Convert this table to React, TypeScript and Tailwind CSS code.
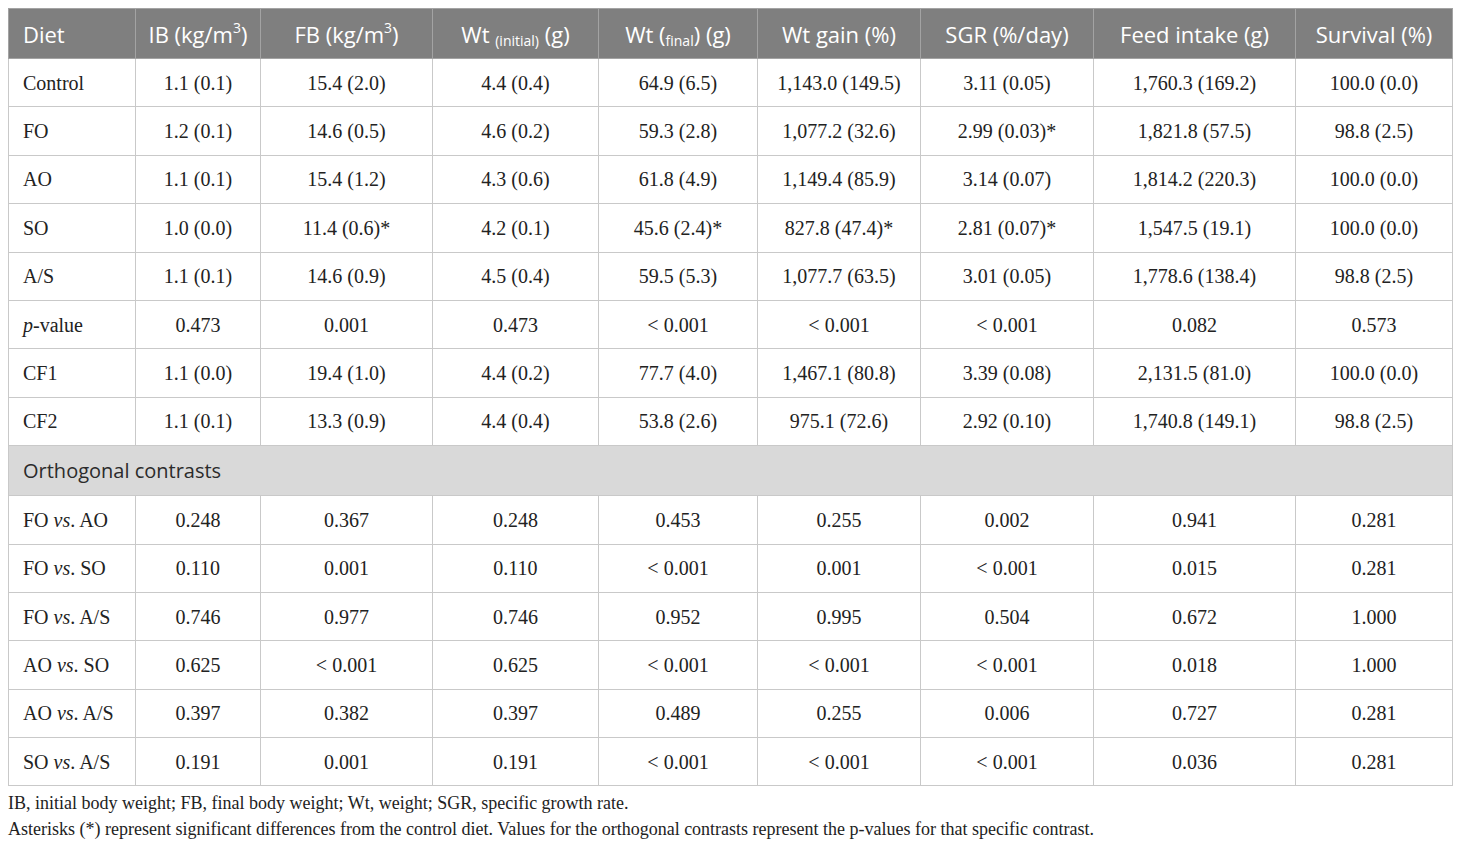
import React from 'react'

const serif = { fontFamily: '"Liberation Serif", "DejaVu Serif", serif' }

type Row = { diet: React.ReactNode; vals: string[] }

const rows: Row[] = [
    { diet: 'Control', vals: ['1.1 (0.1)', '15.4 (2.0)', '4.4 (0.4)', '64.9 (6.5)', '1,143.0 (149.5)', '3.11 (0.05)', '1,760.3 (169.2)', '100.0 (0.0)'] },
    { diet: 'FO', vals: ['1.2 (0.1)', '14.6 (0.5)', '4.6 (0.2)', '59.3 (2.8)', '1,077.2 (32.6)', '2.99 (0.03)*', '1,821.8 (57.5)', '98.8 (2.5)'] },
    { diet: 'AO', vals: ['1.1 (0.1)', '15.4 (1.2)', '4.3 (0.6)', '61.8 (4.9)', '1,149.4 (85.9)', '3.14 (0.07)', '1,814.2 (220.3)', '100.0 (0.0)'] },
    { diet: 'SO', vals: ['1.0 (0.0)', '11.4 (0.6)*', '4.2 (0.1)', '45.6 (2.4)*', '827.8 (47.4)*', '2.81 (0.07)*', '1,547.5 (19.1)', '100.0 (0.0)'] },
    { diet: 'A/S', vals: ['1.1 (0.1)', '14.6 (0.9)', '4.5 (0.4)', '59.5 (5.3)', '1,077.7 (63.5)', '3.01 (0.05)', '1,778.6 (138.4)', '98.8 (2.5)'] },
    { diet: <><i>p</i>-value</>, vals: ['0.473', '0.001', '0.473', '< 0.001', '< 0.001', '< 0.001', '0.082', '0.573'] },
    { diet: 'CF1', vals: ['1.1 (0.0)', '19.4 (1.0)', '4.4 (0.2)', '77.7 (4.0)', '1,467.1 (80.8)', '3.39 (0.08)', '2,131.5 (81.0)', '100.0 (0.0)'] },
    { diet: 'CF2', vals: ['1.1 (0.1)', '13.3 (0.9)', '4.4 (0.4)', '53.8 (2.6)', '975.1 (72.6)', '2.92 (0.10)', '1,740.8 (149.1)', '98.8 (2.5)'] },
]

const vs = (a: string, b: string) => <>{a} <i>vs</i>. {b}</>

const contrasts: Row[] = [
    { diet: vs('FO', 'AO'), vals: ['0.248', '0.367', '0.248', '0.453', '0.255', '0.002', '0.941', '0.281'] },
    { diet: vs('FO', 'SO'), vals: ['0.110', '0.001', '0.110', '< 0.001', '0.001', '< 0.001', '0.015', '0.281'] },
    { diet: vs('FO', 'A/S'), vals: ['0.746', '0.977', '0.746', '0.952', '0.995', '0.504', '0.672', '1.000'] },
    { diet: vs('AO', 'SO'), vals: ['0.625', '< 0.001', '0.625', '< 0.001', '< 0.001', '< 0.001', '0.018', '1.000'] },
    { diet: vs('AO', 'A/S'), vals: ['0.397', '0.382', '0.397', '0.489', '0.255', '0.006', '0.727', '0.281'] },
    { diet: vs('SO', 'A/S'), vals: ['0.191', '0.001', '0.191', '< 0.001', '< 0.001', '< 0.001', '0.036', '0.281'] },
]

const widths = [127, 125, 172, 166, 159, 163, 173, 202, 157]

const headers: React.ReactNode[] = [
    'Diet',
    <>IB (kg/m<sup className="text-[14px] -top-[0.7em]">3</sup>)</>,
    <>FB (kg/m<sup className="text-[14px] -top-[0.7em]">3</sup>)</>,
    <>Wt <sub className="text-[14px]">(initial)</sub> (g)</>,
    <>Wt (<sub className="text-[14px]">final</sub>) (g)</>,
    'Wt gain (%)',
    'SGR (%/day)',
    'Feed intake (g)',
    'Survival (%)',
]

const DataRow = ({ row }: { row: Row }) => (
    <tr className="h-[48.4px]">
        <td className="border border-[#c9c9c9] pl-[14px] text-left">{row.diet}</td>
        {row.vals.map((v, i) => (
            <td key={i} className="border border-[#c9c9c9] text-center">{v}</td>
        ))}
    </tr>
)

export default function App() {
    return (
        <div className="bg-white w-[1460px] h-[847px] pt-2 px-2 text-[#222]">
            <table
                className="table-fixed border-collapse w-[1444px] text-[20px]"
                style={serif}
            >
                <colgroup>
                    {widths.map((w, i) => <col key={i} style={{ width: w }} />)}
                </colgroup>
                <thead>
                    <tr className="h-[50px] bg-[#7f7f7f] text-white font-['Open_Sans',sans-serif] text-[22px] leading-none">
                        {headers.map((h, i) => (
                            <th
                                key={i}
                                className={`border border-[#a3a3a3] font-normal ${i === 0 ? 'text-left pl-[14px]' : 'text-center'}`}
                            >
                                {h}
                            </th>
                        ))}
                    </tr>
                </thead>
                <tbody>
                    {rows.map((r, i) => <DataRow key={i} row={r} />)}
                    <tr className="h-[50px] bg-[#d9d9d9]">
                        <td colSpan={9} className="border border-[#c9c9c9] pl-[14px] text-[20px] text-[#2b2b2b] font-['Open_Sans',sans-serif]">
                            Orthogonal contrasts
                        </td>
                    </tr>
                    {contrasts.map((r, i) => <DataRow key={i} row={r} />)}
                </tbody>
            </table>
            <div className="mt-[4px] text-[18px] leading-[26px] text-[#222]" style={serif}>
                <p>IB, initial body weight; FB, final body weight; Wt, weight; SGR, specific growth rate.</p>
                <p>Asterisks (*) represent significant differences from the control diet. Values for the orthogonal contrasts represent the p-values for that specific contrast.</p>
            </div>
        </div>
    )
}
